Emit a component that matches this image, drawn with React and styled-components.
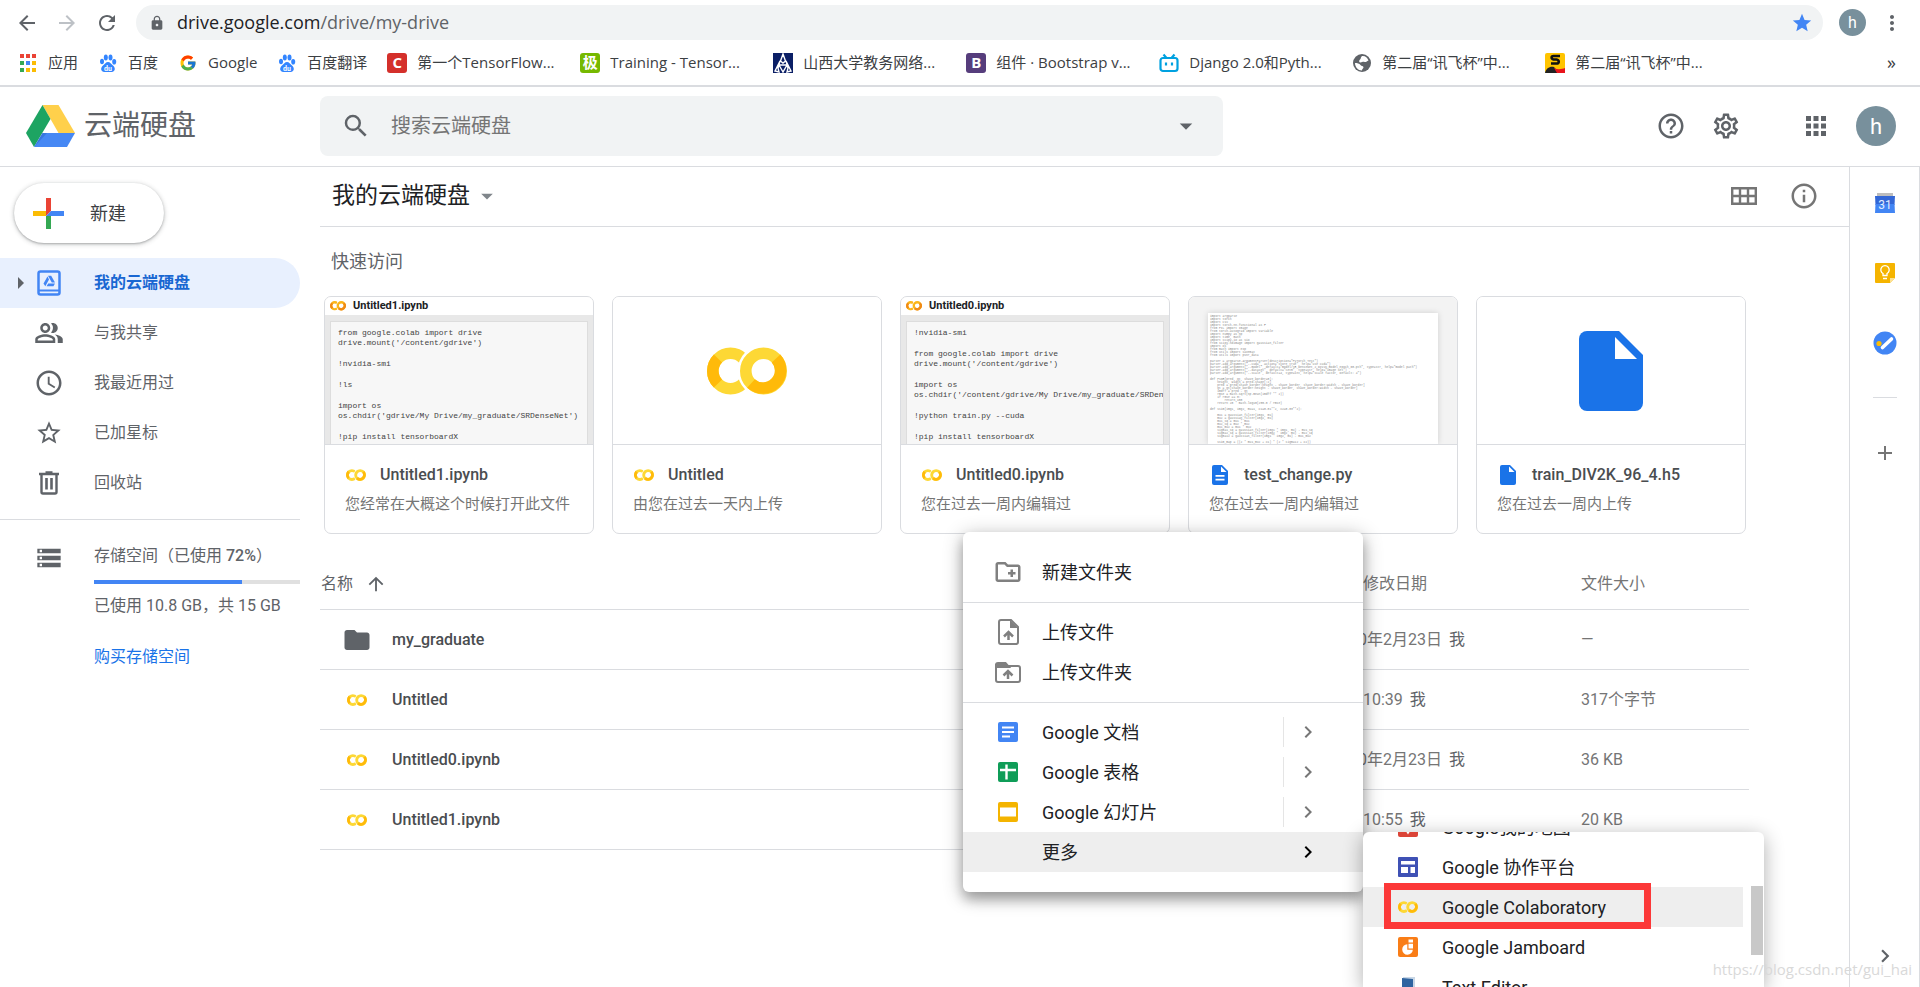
import React, { useId, useState } from "react";
import styled, { createGlobalStyle, css } from "styled-components";
import {
  MdAccessTime,
  MdApps,
  MdArrowBack,
  MdArrowDropDown,
  MdArrowForward,
  MdArrowUpward,
  MdAdd,
  MdChevronRight,
  MdFolder,
  MdHelpOutline,
  MdInfoOutline,
  MdLock,
  MdMoreVert,
  MdOutlineCreateNewFolder,
  MdOutlinePeopleAlt,
  MdOutlineSettings,
  MdRefresh,
  MdSearch,
  MdStar,
  MdStarBorder,
  MdStorage,
} from "react-icons/md";
import { FcGoogle } from "react-icons/fc";

const GlobalStyles = createGlobalStyle`
  :root {
    --color-grey-50: #f1f3f4;
    --color-grey-100: #eeeeee;
    --color-grey-200: #dadce0;
    --color-grey-500: #80868b;
    --color-grey-600: #5f6368;
    --color-grey-800: #3c4043;
    --color-grey-900: #202124;
    --color-blue: #4285f4;
    --color-blue-strong: #1a73e8;
    --font-app: Roboto, "Noto Sans CJK SC", sans-serif;
    --font-chrome: "Open Sans", "Noto Sans CJK SC", sans-serif;
  }

  *, *::before, *::after {
    box-sizing: border-box;
  }

  body {
    margin: 0;
    background: #fff;
    color: var(--color-grey-600);
    font-family: var(--font-app);
    font-size: 16px;
    line-height: 1.5;
  }

  button, input {
    font: inherit;
    color: inherit;
    border: none;
    background: none;
    padding: 0;
  }

  a {
    color: inherit;
    text-decoration: none;
  }

  svg {
    display: block;
    flex-shrink: 0;
  }
`;

const Page = styled.div`
  position: relative;
  display: flex;
  flex-direction: column;
  height: 100vh;
  overflow: hidden;
`;

/* ---------- browser bars ---------- */

const Toolbar = styled.div`
  display: flex;
  align-items: center;
  height: 40px;
  padding: 5px 16px 0 15px;
`;

const NavButtons = styled.div`
  display: flex;
  gap: 16px;
  width: 121px;
`;

const IconButton = styled.button`
  display: flex;
  align-items: center;
  justify-content: center;
  color: ${(props) => props.$color || "var(--color-grey-600)"};
`;

const Omnibox = styled.div`
  flex: 1;
  display: flex;
  align-items: center;
  height: 35px;
  padding: 0 10px 0 13px;
  border-radius: 18px;
  background: var(--color-grey-50);
`;

const Url = styled.span`
  flex: 1;
  margin-left: 12px;
  font-family: var(--font-chrome);
  font-size: 18px;
  color: var(--color-grey-600);
`;

const Host = styled.span`
  color: var(--color-grey-900);
`;

const Avatar = styled.button`
  display: flex;
  align-items: center;
  justify-content: center;
  width: ${(props) => props.$size}px;
  height: ${(props) => props.$size}px;
  border-radius: 50%;
  background: #78909c;
  color: #fff;
  font-size: ${(props) => (props.$size > 30 ? 22 : 16)}px;
`;

const ToolbarEnd = styled.div`
  display: flex;
  align-items: center;
  gap: 14px;
  margin-left: 16px;
`;

const BookmarksBar = styled.nav`
  display: flex;
  align-items: center;
  gap: 20px;
  height: 47px;
  padding: 0 24px 0 18px;
  border-bottom: 2px solid var(--color-grey-200);
  font-family: var(--font-chrome);
  font-size: 15px;
  color: var(--color-grey-800);
`;

const Bookmark = styled.a`
  display: flex;
  align-items: center;
  gap: 10px;
  white-space: nowrap;
  width: ${(props) => (props.$wide ? "173px" : "auto")};
`;

const More = styled.button`
  margin-left: auto;
  font-size: 18px;
`;

const Favicon = styled.span`
  display: flex;
  align-items: center;
  justify-content: center;
  width: 20px;
  height: 20px;
  border-radius: 3px;
  flex-shrink: 0;
  background: ${(props) => props.$bg || "none"};
  color: #fff;
  font-weight: 700;
`;

/* ---------- drive header ---------- */

const Header = styled.header`
  display: flex;
  align-items: center;
  height: 80px;
  padding: 0 24px 1px 0;
  border-bottom: 1px solid var(--color-grey-200);
`;

const Brand = styled.a`
  display: flex;
  align-items: center;
  gap: 9px;
  width: 320px;
  flex-shrink: 0;
  padding-left: 26px;
  font-size: 28px;
`;

const SearchBox = styled.form`
  flex: 1;
  max-width: 903px;
  display: flex;
  align-items: center;
  height: 60px;
  padding: 0 22px 0 21px;
  border-radius: 8px;
  background: var(--color-grey-50);
`;

const SearchInput = styled.input`
  flex: 1;
  margin-left: 20px;
  font-size: 20px;
  outline: none;

  &::placeholder {
    color: #757575;
    opacity: 1;
  }
`;

const HeaderActions = styled.div`
  display: flex;
  align-items: center;
  gap: 25px;
  margin-left: auto;
`;

const AppsActions = styled.div`
  display: flex;
  align-items: center;
  gap: 25px;
  margin-left: 35px;
`;

/* ---------- layout ---------- */

const Body = styled.div`
  flex: 1;
  display: flex;
  border-right: 1px solid var(--color-grey-200);
`;

const Sidebar = styled.aside`
  width: 300px;
  margin-right: 20px;
  flex-shrink: 0;
  padding-top: 16px;
`;

const NewButton = styled.button`
  display: flex;
  align-items: center;
  gap: 26px;
  width: 150px;
  height: 60px;
  margin-left: 14px;
  padding-left: 19px;
  border-radius: 30px;
  font-size: 18px;
  color: var(--color-grey-800);
  box-shadow: 0 1px 2px rgba(60, 64, 67, 0.3), 0 1px 4px 1px rgba(60, 64, 67, 0.2);
`;

const NavList = styled.nav`
  padding: 15px 0 11px;
  border-bottom: 1px solid var(--color-grey-200);
`;

const NavItem = styled.a`
  display: grid;
  grid-template-columns: 36px 58px 1fr;
  align-items: center;
  height: 50px;
  border-radius: 0 25px 25px 0;

  ${(props) =>
    props.$active &&
    css`
      background: #e8f0fe;
      color: #1967d2;
      font-weight: 700;
    `}
`;

const NavIcon = styled.span`
  display: flex;
  justify-content: center;
  width: 26px;
  color: ${(props) => (props.$active ? "var(--color-blue)" : "var(--color-grey-600)")};
`;

const Expander = styled.span`
  justify-self: end;
  margin-right: 12px;
  border: 6px solid transparent;
  border-left-color: var(--color-grey-600);
  border-right: none;
`;

const Storage = styled.section`
  display: grid;
  grid-template-columns: 36px 58px 1fr;
  align-items: start;
  padding-top: 24px;
`;

const StorageInfo = styled.div`
  display: flex;
  flex-direction: column;
  line-height: 24px;
`;

const Percent = styled.span`
  font-weight: 500;
`;

const Meter = styled.div`
  height: 4px;
  margin: 12px 0 10px;
  background: #e0e0e0;
`;

const MeterFill = styled.div`
  height: 4px;
  background: var(--color-blue);
`;

const BuyLink = styled.a`
  margin-top: 27px;
  color: var(--color-blue-strong);
`;

const Main = styled.main`
  flex: 1;
  min-width: 0;
`;

const MainHeader = styled.div`
  display: flex;
  align-items: center;
  height: 60px;
  padding: 0 30px 1px 12px;
  border-bottom: 1px solid var(--color-grey-200);
`;

const Title = styled.button`
  display: flex;
  align-items: center;
  gap: 3px;
  margin-right: auto;
  font-size: 23px;
  color: var(--color-grey-900);
`;

const ViewActions = styled.div`
  display: flex;
  align-items: center;
  gap: 32px;
`;

const Content = styled.div`
  padding-right: 100px;
`;

const SectionTitle = styled.h2`
  margin: 0;
  padding: 23px 11px 22px;
  font-size: 18px;
  font-weight: 400;
  line-height: 24px;
`;

/* ---------- quick access cards ---------- */

const Cards = styled.div`
  display: grid;
  grid-template-columns: repeat(5, 1fr);
  gap: 18px;
  padding: 0 3px 0 4px;
`;

const Card = styled.article`
  height: 238px;
  min-width: 0;
  border: 1px solid var(--color-grey-200);
  border-radius: 7px;
  overflow: hidden;
`;

const Preview = styled.div`
  display: flex;
  flex-direction: column;
  align-items: ${(props) => (props.$center ? "center" : "stretch")};
  justify-content: ${(props) => (props.$center ? "center" : "flex-start")};
  height: 148px;
  overflow: hidden;
  border-bottom: 1px solid var(--color-grey-200);
  background: ${(props) => props.$bg || "#fff"};
`;

const NotebookTitle = styled.div`
  display: flex;
  align-items: center;
  gap: 7px;
  height: 18px;
  flex-shrink: 0;
  padding-left: 5px;
  font-size: 11px;
  font-weight: 700;
  color: var(--color-grey-900);
  background: #fff;
`;

const Notebook = styled.div`
  display: flex;
  flex-direction: column;
  gap: 11px;
  flex: 1;
  margin: 6px 5px 0;
  padding: 6px 0 0 7px;
  border: 1px solid #dddddd;
  border-bottom: none;
  overflow: hidden;
  background: #f7f7f7;
`;

const Cell = styled.pre`
  margin: 0;
  font-family: "Liberation Mono", monospace;
  font-size: 8px;
  line-height: 10px;
  color: #444;
`;

const Sheet = styled.pre`
  flex: 1;
  margin: 16px 19px 0;
  padding: 2px;
  overflow: hidden;
  background: #fff;
  box-shadow: 0 0 6px rgba(0, 0, 0, 0.15);
  font-family: "Liberation Mono", monospace;
  font-size: 3px;
  line-height: 3px;
  color: #888;
`;

const CardBody = styled.div`
  padding: 18px 10px 0 20px;
  line-height: 24px;
`;

const CardName = styled.div`
  display: grid;
  grid-template-columns: 22px 1fr;
  gap: 13px;
  align-items: center;
  justify-items: center;
  margin-bottom: 5px;
  color: #4a4d50;
  font-weight: 500;

  span {
    justify-self: start;
  }
`;

const CardNote = styled.div`
  font-size: 15px;
  color: #757575;
  white-space: nowrap;
`;

/* ---------- file table ---------- */

const Table = styled.table`
  width: 100%;
  margin-top: 25px;
  border-collapse: collapse;
  table-layout: fixed;
  text-align: left;
  color: #757575;

  th {
    height: 50px;
    padding: 1px 0 0 1px;
    font-weight: 400;
    border-bottom: 1px solid var(--color-grey-200);
  }

  td {
    height: 60px;
    padding: 1px 0 0 1px;
    border-bottom: 1px solid var(--color-grey-200);
  }
`;

const Col = styled.col`
  width: ${(props) => props.$width};
`;

const SortButton = styled.button`
  display: flex;
  align-items: center;
  gap: 12px;
  color: var(--color-grey-600);
`;

const FileName = styled.div`
  display: grid;
  grid-template-columns: 30px 1fr;
  gap: 20px;
  align-items: center;
  justify-items: center;
  padding-left: 21px;
  color: #4a4d50;
  font-weight: 500;

  span {
    justify-self: start;
  }
`;

const Owner = styled.span`
  margin-left: 7px;
  color: var(--color-grey-600);
`;

/* ---------- side panel ---------- */

const SidePanel = styled.aside`
  display: flex;
  flex-direction: column;
  align-items: center;
  width: 70px;
  padding: 24px 2px 18px 2px;
  border-left: 1px solid var(--color-grey-200);
`;

const PanelApps = styled.div`
  display: flex;
  flex-direction: column;
  gap: 46px;
  padding-bottom: 42px;
  border-bottom: 1px solid var(--color-grey-200);
`;

const PanelAdd = styled(IconButton)`
  margin: 43px 0 auto;
`;

/* ---------- menus ---------- */

const Menu = styled.div`
  position: absolute;
  left: 963px;
  top: 532px;
  z-index: 2;
  width: 400px;
  padding: 20px 0;
  border-radius: 6px;
  background: #fff;
  box-shadow: 0 4px 20px rgba(0, 0, 0, 0.3), 0 8px 12px rgba(0, 0, 0, 0.22);
`;

const MenuItem = styled.button`
  display: grid;
  grid-template-columns: ${(props) => props.$iconWidth || "48px"} 1fr auto;
  align-items: center;
  width: ${(props) => props.$width || "100%"};
  height: 40px;
  padding: 0 43px 0 31px;
  font-size: 18px;
  text-align: left;
  color: var(--color-grey-900);
  background: ${(props) => (props.$active ? "var(--color-grey-100)" : "none")};
`;

const MenuIcon = styled.span`
  display: flex;
  justify-content: center;
  width: 28px;
  color: #808080;
`;

const MenuArrow = styled.span`
  display: flex;
  align-items: center;
  height: 30px;
  padding-left: 12px;
  border-left: 1px solid ${(props) => (props.$divided ? "#e5e5e5" : "transparent")};
  color: ${(props) => (props.$divided ? "#777" : "#000")};
`;

const MenuDivider = styled.hr`
  margin: 10px 0 9px;
  border: none;
  border-top: 1px solid var(--color-grey-200);
`;

const Submenu = styled.div`
  position: absolute;
  left: 1363px;
  top: 832px;
  bottom: 0;
  z-index: 3;
  width: 401px;
  overflow: hidden;
  border-radius: 6px 6px 0 0;
  background: #fff;
  box-shadow: 0 4px 20px rgba(0, 0, 0, 0.32);
`;

// the list is scrolled down, so its first entry is cut by the top edge
const SubmenuList = styled.div`
  margin-top: -25px;
`;

const ScrollThumb = styled.div`
  position: absolute;
  right: 1px;
  top: 54px;
  width: 12px;
  height: 69px;
  background: #c8c8c8;
`;

const Marker = styled.div`
  position: absolute;
  left: 21px;
  top: 51px;
  width: 267px;
  height: 46px;
  border: 7px solid #fc3838;
`;

const Watermark = styled.div`
  position: absolute;
  right: 8px;
  bottom: 6px;
  z-index: 4;
  font-family: var(--font-chrome);
  font-size: 15px;
  line-height: 24px;
  color: #d9d9d9;
`;

/* ---------- icons ---------- */

function ColabIcon({ width = 20, warm }) {
  const id = useId();
  const light = warm ? "#fbb519" : "#fdd835";
  const dark = warm ? "#f08a15" : "#ffba0a";
  return (
    <svg width={width} height={width * 0.6} viewBox="0 0 80 48">
      <mask id={id} maskUnits="userSpaceOnUse" x="0" y="0" width="80" height="48">
        <rect width="80" height="48" fill="#fff" />
        <circle cx="56.5" cy="24" r="26" fill="#000" />
        <path d="M38 0h42v48H38z" fill="#000" />
      </mask>
      <g fill="none" strokeWidth="11.6">
        <g mask={`url(#${id})`}>
          <circle cx="23.5" cy="24" r="17.7" stroke={light} />
          <path d="M11 11.500a17.700 17.700 0 0 0 0 25" stroke={dark} />
        </g>
        <circle cx="56.5" cy="24" r="17.7" stroke={light} />
        <path d="M69 11.500a17.700 17.700 0 0 1-25 25" stroke={dark} />
      </g>
    </svg>
  );
}

const DocFileIcon = ({ width = 17, lines }) => (
  <svg width={width} height={width * 1.25} viewBox="0 0 64 80">
    <path d="M8 0h32l24 24v48a8 8 0 0 1-8 8H8a8 8 0 0 1-8-8V8a8 8 0 0 1 8-8z" fill="#1a73e8" />
    <path d="M36 6v22h22z" fill="#fff" />
    {lines && <path d="M14 43h36M14 58h36" stroke="#fff" strokeWidth="7" />}
  </svg>
);

const DriveLogo = () => (
  <svg width="49" height="42" viewBox="0 0 49 42">
    <path d="M16.500 0h16L49 28H32.500z" fill="#ffd04b" />
    <path d="M16.500 0l8 14L8 42 0 28z" fill="#1da462" />
    <path d="M16.500 28H49l-8 14H8z" fill="#4688f4" />
    <path d="M16.500 28l-8.500 14 13-14z" fill="#2a66c9" opacity=".5" />
  </svg>
);

const PlusIcon = () => (
  <svg width="31" height="31" viewBox="0 0 31 31">
    <path d="M13 0h5v13l-5 5z" fill="#ea4335" />
    <path d="M0 13h13v5H0z" fill="#fbbc04" />
    <path d="M13 18h5v13h-5z" fill="#34a853" />
    <path d="M18 13h13v5H13z" fill="#4285f4" />
  </svg>
);

const MyDriveIcon = () => (
  <svg width="24" height="26" viewBox="0 0 24 26" fill="none" stroke="currentColor">
    <rect x="1.500" y="1.500" width="21" height="23" rx="2" strokeWidth="2.500" />
    <path d="M2 20.500h20" strokeWidth="2" />
    <path d="M10.500 6.500L6.500 13.500 8.300 16.300 12 9.500z" fill="currentColor" stroke="none" />
    <path d="M11 5.800h3.200L18 12.500h-3.200z" fill="currentColor" stroke="none" />
    <path d="M11.200 13.500H18l-1.600 2.800H9.600z" fill="currentColor" stroke="none" />
  </svg>
);

const TrashIcon = () => (
  <svg width="20" height="24" viewBox="0 0 20 24" fill="none" stroke="currentColor">
    <path d="M0 3h20M6.500 1.500h7" strokeWidth="2.400" />
    <path d="M2.500 4v17a1.500 1.500 0 0 0 1.500 1.500h12a1.500 1.500 0 0 0 1.500-1.500V4" strokeWidth="2.400" />
    <path d="M7.500 7v11.500M12.500 7v11.500" strokeWidth="2.600" />
  </svg>
);

const GridIcon = () => (
  <svg width="26" height="18" viewBox="0 0 26 18" fill="none" stroke="#757575" strokeWidth="2.400">
    <path d="M1.200 1.200h23.600v15.600H1.200zM1 9h24M9 1v16M17 1v16" />
  </svg>
);

const UploadFileIcon = () => (
  <svg width="21" height="26" viewBox="0 0 21 26" fill="none" stroke="currentColor" strokeWidth="2">
    <path d="M13 1H3a2 2 0 0 0-2 2v20a2 2 0 0 0 2 2h15a2 2 0 0 0 2-2V8z" />
    <path d="M12 1l8 8h-8z" fill="currentColor" stroke="none" />
    <path d="M10.500 21v-7M6 17.500l4.500-4.500 4.500 4.500" strokeWidth="2.500" />
  </svg>
);

const UploadFolderIcon = () => (
  <svg width="26" height="21" viewBox="0 0 26 21" fill="none" stroke="currentColor" strokeWidth="2">
    <path d="M1 3v15a2 2 0 0 0 2 2h20a2 2 0 0 0 2-2V6a2 2 0 0 0-2-2H13z" />
    <path d="M1 5V3a2 2 0 0 1 2-2h7.500L14 5z" fill="currentColor" />
    <path d="M13 17v-7M8.500 13.500L13 9l4.500 4.500" strokeWidth="2.500" />
  </svg>
);

const DocsIcon = () => (
  <svg width="20" height="20" viewBox="0 0 20 20">
    <rect width="20" height="20" rx="2" fill="#4285f4" />
    <path d="M4 5.500h12M4 10h12M4 14.500h8" stroke="#fff" strokeWidth="2" />
  </svg>
);

const SheetsIcon = () => (
  <svg width="20" height="20" viewBox="0 0 20 20">
    <rect width="20" height="20" rx="2" fill="#0f9d58" />
    <path d="M2 8h16M8.500 2.500v15" stroke="#fff" strokeWidth="2.400" />
  </svg>
);

const SlidesIcon = () => (
  <svg width="20" height="20" viewBox="0 0 20 20">
    <rect width="20" height="20" rx="2" fill="#f4b400" />
    <rect x="2" y="5.500" width="16" height="9" fill="#fff" />
  </svg>
);

const MyMapsIcon = () => (
  <svg width="20" height="20" viewBox="0 0 20 20">
    <rect width="20" height="20" rx="2" fill="#db4437" />
    <path d="M10 3a4.500 4.500 0 0 0-4.500 4.500C5.500 11 10 17.500 10 17.500s4.500-6.500 4.500-10A4.500 4.500 0 0 0 10 3z" fill="#fff" />
  </svg>
);

const SitesIcon = () => (
  <svg width="20" height="20" viewBox="0 0 20 20">
    <rect width="20" height="20" rx="1" fill="#3f51b5" />
    <path d="M3 4h14v3.500H3zM3 10h7v6H3zM12.500 10H17v6h-4.500z" fill="#fff" />
  </svg>
);

const JamboardIcon = () => (
  <svg width="20" height="20" viewBox="0 0 20 20">
    <rect width="20" height="20" rx="2" fill="#f97d17" />
    <path d="M9.300 7.200v5.500h5.500a5.300 5.300 0 1 1-5.500-5.500z" fill="#fff" />
    <path d="M10.500 2.500H15v3h-4.500zM10.500 6.700H15v4.800h-4.500z" fill="#fff" />
  </svg>
);

const TextEditorIcon = () => (
  <svg width="20" height="20" viewBox="0 0 20 20">
    <path d="M5 0h12v20H5z" fill="#c9d7e6" />
    <path d="M4 1l11 1v18H4z" fill="#2f64a0" />
  </svg>
);

const CalendarIcon = () => (
  <svg width="24" height="24" viewBox="0 0 24 24">
    <path d="M4 2h16v3H4z" fill="#bdbdbd" />
    <path d="M2 5h20l-.500 9h-19z" fill="#3367d6" />
    <path d="M2.500 13h19l.500 9H2z" fill="#4285f4" />
    <text x="12" y="17.500" textAnchor="middle" fontSize="12" fontFamily="Roboto, sans-serif" fill="#e3edff">
      31
    </text>
  </svg>
);

const KeepIcon = () => (
  <svg width="24" height="24" viewBox="0 0 24 24">
    <path d="M3 2h18a1 1 0 0 1 1 1v14l-5 5H3a1 1 0 0 1-1-1V3a1 1 0 0 1 1-1z" fill="#f5b400" />
    <path d="M22 17h-5v5z" fill="#fde293" />
    <path d="M10 14.500v-2a4.200 4.200 0 1 1 4 0v2zM10 17.500h4" fill="none" stroke="#fff" strokeWidth="1.300" />
  </svg>
);

const TasksIcon = () => (
  <svg width="24" height="24" viewBox="0 0 24 24">
    <circle cx="12" cy="12" r="11.500" fill="#4285f4" />
    <path d="M9.500 16.500L18.500 8" stroke="#fff" strokeWidth="3.600" strokeLinecap="round" />
    <circle cx="6" cy="12.500" r="2.600" fill="#fbbc04" />
  </svg>
);

const AppsGridIcon = () => (
  <svg width="20" height="20" viewBox="0 0 20 20">
    {["#ea4335", "#ea4335", "#ea4335", "#34a853", "#4285f4", "#fbbc04", "#34a853", "#fbbc04", "#fbbc04"].map(
      (fill, i) => (
        <rect key={i} x={2 + (i % 3) * 6} y={1 + Math.floor(i / 3) * 7} width="4" height="4" fill={fill} />
      )
    )}
  </svg>
);

const BaiduIcon = () => (
  <svg width="20" height="20" viewBox="0 0 20 20">
    <g fill="#3385ff">
      <ellipse cx="4" cy="8.500" rx="2" ry="2.800" />
      <ellipse cx="7.800" cy="4.500" rx="2" ry="3" />
      <ellipse cx="12.500" cy="4.500" rx="2" ry="3" />
      <ellipse cx="16.200" cy="8.800" rx="2" ry="2.800" />
      <path d="M10 9c2.200 0 3 2 5 3.600 3.200 2.800 1.800 6.400-1.200 6.400H6.200C3.200 19 1.800 15.400 5 12.600 7 11 7.800 9 10 9z" />
    </g>
    <text x="10" y="17.500" textAnchor="middle" fontSize="7" fontWeight="700" fontFamily="Roboto, sans-serif" fill="#fff">
      du
    </text>
  </svg>
);

const GlobeIcon = () => (
  <svg width="20" height="20" viewBox="0 0 20 20">
    <circle cx="10" cy="10" r="9" fill="#5f6368" />
    <path d="M10 3c3-.500 5.500 1.500 6.500 4.500-2 .500-2 2-4 1.500-1.500-.500-2.500.500-4 .500C7 9.500 6.500 7.500 8 6.500 9 6 8.500 4 10 3z" fill="#fff" />
    <path d="M3 10c2 0 4.500.500 5.500 2 .800 1.200 3 .800 3 2.500 0 1-1.500 1-1.500 3-4 0-7-3.500-7-7.500z" fill="#fff" />
  </svg>
);

const UniversityIcon = () => (
  <svg width="20" height="20" viewBox="0 0 20 20">
    <rect width="20" height="20" fill="#0b1f66" />
    <path d="M10 1l2.500 7-2.500 2-2.500-2zM7 8l-5 10 4 1-1-4zM13 8l5 10-4 1 1-4zM6 12h8l-4 7z" fill="none" stroke="#fff" strokeWidth="1.400" />
  </svg>
);

const BiliIcon = () => (
  <svg width="20" height="20" viewBox="0 0 20 20" fill="none" stroke="#00a1e0" strokeWidth="2.200">
    <rect x="1.500" y="5" width="17" height="13" rx="2.500" />
    <path d="M4.500 1.500L7.500 5M15.500 1.500l-3 3.500M7 9.500v3M13 9.500v3" />
  </svg>
);

const SIcon = () => (
  <svg width="20" height="20" viewBox="0 0 20 20">
    <rect width="20" height="20" rx="2" fill="#ffc400" />
    <path d="M15 3H8.500c-2.500 0-2.500 3 0 3.500h3c3 .500 3 4 0 4H6" fill="none" stroke="#111" strokeWidth="2.600" />
    <path d="M0 20c1-5 5-7 9-6l5 6z" fill="#222" />
    <path d="M9 15c4 2 8 1 11 0v5h-8z" fill="#e8141c" />
  </svg>
);

/* ---------- data ---------- */

const bookmarks = [
  { label: "应用", icon: <AppsGridIcon /> },
  { label: "百度", icon: <BaiduIcon /> },
  { label: "Google", icon: <FcGoogle size={18} /> },
  { label: "百度翻译", icon: <BaiduIcon /> },
  { label: "第一个TensorFlow...", icon: "C", bg: "#d4302b", wide: true },
  { label: "Training - Tensor...", icon: "极", bg: "#76b900", wide: true },
  { label: "山西大学教务网络...", icon: <UniversityIcon />, wide: true },
  { label: "组件 · Bootstrap v...", icon: "B", bg: "#563d7c", wide: true },
  { label: "Django 2.0和Pyth...", icon: <BiliIcon />, wide: true },
  { label: "第二届“讯飞杯”中...", icon: <GlobeIcon />, wide: true },
  { label: "第二届“讯飞杯”中...", icon: <SIcon />, wide: true },
];

const navItems = [
  { label: "我的云端硬盘", icon: <MyDriveIcon />, active: true },
  { label: "与我共享", icon: <MdOutlinePeopleAlt size={30} /> },
  { label: "我最近用过", icon: <MdAccessTime size={30} /> },
  { label: "已加星标", icon: <MdStarBorder size={28} /> },
  { label: "回收站", icon: <TrashIcon /> },
];

const notebook1 = [
  "from google.colab import drive\ndrive.mount('/content/gdrive')",
  "!nvidia-smi",
  "!ls",
  "import os\nos.chdir('gdrive/My Drive/my_graduate/SRDenseNet')",
  "!pip install tensorboardX",
];

const notebook0 = [
  "!nvidia-smi",
  "from google.colab import drive\ndrive.mount('/content/gdrive')",
  "import os\nos.chdir('/content/gdrive/My Drive/my_graduate/SRDenseNet')",
  "!python train.py --cuda",
  "!pip install tensorboardX",
];

const pythonSource = `import argparse
import torch
import cv2
import torch.nn.functional as F
from PIL import Image
from torch.autograd import Variable
import numpy as np
import time, math
import scipy.io as sio
from scipy.ndimage import gaussian_filter
import os
from math import exp
from utils import savemat
from utils import psnr_data

parser = argparse.ArgumentParser(description="PyTorch Test")
parser.add_argument("--cuda", action="store_true", help="use cuda")
parser.add_argument("--model", default="model/SR_DenseNet_2_DIV2K_model_epoch_60.pth", type=str, help="model path")
parser.add_argument("--dataset", default="Set5", type=str, help="image set")
parser.add_argument("--scale", default=4, type=int, help="scale factor, Default: 4")

def PSNR(pred, gt, shave_border=0):
    height, width = pred.shape[:2]
    pred = pred[shave_border:height - shave_border, shave_border:width - shave_border]
    gt = gt[shave_border:height - shave_border, shave_border:width - shave_border]
    imdff = pred - gt
    rmse = math.sqrt(np.mean(imdff ** 2))
    if rmse == 0:
        return 100
    return 20 * math.log10(255.0 / rmse)

def ssim(img1, img2, mu=1, C1=0.01**2, C2=0.03**2):

    mu1 = gaussian_filter(img1, mu)
    mu2 = gaussian_filter(img2, mu)
    mu1_sq = mu1 * mu1
    mu2_sq = mu2 * mu2
    mu1_mu2 = mu1 * mu2
    sigma1_sq = gaussian_filter(img1 * img1, mu) - mu1_sq
    sigma2_sq = gaussian_filter(img2 * img2, mu) - mu2_sq
    sigma12 = gaussian_filter(img1 * img2, mu) - mu1_mu2

    ssim_map = ((2 * mu1_mu2 + C1) * (2 * sigma12 + C2))`;

const cards = [
  { name: "Untitled1.ipynb", note: "您经常在大概这个时候打开此文件", type: "notebook", cells: notebook1 },
  { name: "Untitled", note: "由您在过去一天内上传", type: "colab" },
  { name: "Untitled0.ipynb", note: "您在过去一周内编辑过", type: "notebook", cells: notebook0 },
  { name: "test_change.py", note: "您在过去一周内编辑过", type: "source" },
  { name: "train_DIV2K_96_4.h5", note: "您在过去一周内上传", type: "file" },
];

const files = [
  { name: "my_graduate", folder: true, date: "2020年2月23日", size: "—" },
  { name: "Untitled", date: "上午10:39", size: "317个字节" },
  { name: "Untitled0.ipynb", date: "2020年2月23日", size: "36 KB" },
  { name: "Untitled1.ipynb", date: "上午10:55", size: "20 KB" },
];

const googleApps = [
  { label: "Google 文档", icon: <DocsIcon /> },
  { label: "Google 表格", icon: <SheetsIcon /> },
  { label: "Google 幻灯片", icon: <SlidesIcon /> },
];

const moreApps = [
  { label: "Google我的地图", icon: <MyMapsIcon /> },
  { label: "Google 协作平台", icon: <SitesIcon /> },
  { label: "Google Colaboratory", icon: <ColabIcon />, active: true },
  { label: "Google Jamboard", icon: <JamboardIcon /> },
  { label: "Text Editor", icon: <TextEditorIcon /> },
];

/* ---------- components ---------- */

const CardPreview = ({ card }) => {
  if (card.type === "notebook")
    return (
      <Preview $bg="#e8e8e8">
        <NotebookTitle>
          <ColabIcon width={16} warm />
          {card.name}
        </NotebookTitle>
        <Notebook>
          {card.cells.map((cell) => (
            <Cell key={cell}>{cell}</Cell>
          ))}
        </Notebook>
      </Preview>
    );
  if (card.type === "source")
    return (
      <Preview $bg="#f3f3f3">
        <Sheet>{pythonSource}</Sheet>
      </Preview>
    );
  return <Preview $center>{card.type === "colab" ? <ColabIcon width={80} /> : <DocFileIcon width={64} />}</Preview>;
};

const QuickCard = ({ card }) => {
  const isFile = card.type === "source" || card.type === "file";
  return (
    <Card>
      <CardPreview card={card} />
      <CardBody>
        <CardName>
          {isFile ? <DocFileIcon width={16} lines={card.type === "source"} /> : <ColabIcon />}
          <span>{card.name}</span>
        </CardName>
        <CardNote>{card.note}</CardNote>
      </CardBody>
    </Card>
  );
};

const FileRow = ({ file }) => (
  <tr>
    <td>
      <FileName>
        {file.folder ? <MdFolder size={30} color="#5f6368" /> : <ColabIcon />}
        <span>{file.name}</span>
      </FileName>
    </td>
    <td>
      {file.date}
      <Owner>我</Owner>
    </td>
    <td>{file.size}</td>
  </tr>
);

const ContextMenu = () => (
  <Menu role="menu">
    <MenuItem>
      <MenuIcon>
        <MdOutlineCreateNewFolder size={30} />
      </MenuIcon>
      新建文件夹
    </MenuItem>
    <MenuDivider />
    <MenuItem>
      <MenuIcon>
        <UploadFileIcon />
      </MenuIcon>
      上传文件
    </MenuItem>
    <MenuItem>
      <MenuIcon>
        <UploadFolderIcon />
      </MenuIcon>
      上传文件夹
    </MenuItem>
    <MenuDivider />
    {googleApps.map((app) => (
      <MenuItem key={app.label}>
        <MenuIcon>{app.icon}</MenuIcon>
        {app.label}
        <MenuArrow $divided>
          <MdChevronRight size={24} />
        </MenuArrow>
      </MenuItem>
    ))}
    <MenuItem $active>
      <MenuIcon />
      更多
      <MenuArrow>
        <MdChevronRight size={24} />
      </MenuArrow>
    </MenuItem>
  </Menu>
);

const MoreMenu = () => (
  <Submenu role="menu">
    <SubmenuList>
      {moreApps.map((app) => (
        <MenuItem key={app.label} $width="380px" $iconWidth="48px" $active={app.active}>
          <MenuIcon>{app.icon}</MenuIcon>
          {app.label}
        </MenuItem>
      ))}
    </SubmenuList>
    <ScrollThumb />
    <Marker />
  </Submenu>
);

const App = () => {
  const [query, setQuery] = useState("");
  const used = 72;

  return (
    <>
      <GlobalStyles />
      <Page>
        <Toolbar>
          <NavButtons>
            <IconButton aria-label="后退">
              <MdArrowBack size={24} />
            </IconButton>
            <IconButton aria-label="前进" $color="#bdc1c6">
              <MdArrowForward size={24} />
            </IconButton>
            <IconButton aria-label="重新加载">
              <MdRefresh size={24} />
            </IconButton>
          </NavButtons>
          <Omnibox>
            <MdLock size={16} />
            <Url>
              <Host>drive.google.com</Host>/drive/my-drive
            </Url>
            <MdStar size={22} color="#4285f4" />
          </Omnibox>
          <ToolbarEnd>
            <Avatar $size={27}>h</Avatar>
            <IconButton aria-label="菜单">
              <MdMoreVert size={24} />
            </IconButton>
          </ToolbarEnd>
        </Toolbar>
        <BookmarksBar>
          {bookmarks.map((item, i) => (
            <Bookmark href="#" key={i} $wide={item.wide}>
              <Favicon $bg={item.bg}>{item.icon}</Favicon>
              {item.label}
            </Bookmark>
          ))}
          <More>»</More>
        </BookmarksBar>

        <Header>
          <Brand href="#">
            <DriveLogo />
            云端硬盘
          </Brand>
          <SearchBox onSubmit={(e) => e.preventDefault()}>
            <IconButton aria-label="搜索">
              <MdSearch size={30} />
            </IconButton>
            <SearchInput
              aria-label="搜索云端硬盘"
              placeholder="搜索云端硬盘"
              value={query}
              onChange={(e) => setQuery(e.target.value)}
            />
            <IconButton type="button" aria-label="搜索选项">
              <MdArrowDropDown size={30} />
            </IconButton>
          </SearchBox>
          <HeaderActions>
            <IconButton aria-label="帮助">
              <MdHelpOutline size={30} />
            </IconButton>
            <IconButton aria-label="设置">
              <MdOutlineSettings size={30} />
            </IconButton>
            <AppsActions>
              <IconButton aria-label="Google 应用">
                <MdApps size={30} />
              </IconButton>
              <Avatar $size={40}>h</Avatar>
            </AppsActions>
          </HeaderActions>
        </Header>

        <Body>
          <Sidebar>
            <NewButton>
              <PlusIcon />
              新建
            </NewButton>
            <NavList>
              {navItems.map((item) => (
                <NavItem href="#" key={item.label} $active={item.active}>
                  {item.active ? <Expander /> : <span />}
                  <NavIcon $active={item.active}>{item.icon}</NavIcon>
                  {item.label}
                </NavItem>
              ))}
            </NavList>
            <Storage>
              <span />
              <NavIcon>
                <MdStorage size={28} />
              </NavIcon>
              <StorageInfo>
                <span>
                  存储空间（已使用 <Percent>{used}%</Percent>）
                </span>
                <Meter>
                  <MeterFill style={{ width: `${used}%` }} />
                </Meter>
                <span>已使用 10.8 GB，共 15 GB</span>
                <BuyLink href="#">购买存储空间</BuyLink>
              </StorageInfo>
            </Storage>
          </Sidebar>

          <Main>
            <MainHeader>
              <Title>
                我的云端硬盘
                <MdArrowDropDown size={28} color="#80868b" />
              </Title>
              <ViewActions>
                <IconButton aria-label="网格视图">
                  <GridIcon />
                </IconButton>
                <IconButton aria-label="查看详细信息" $color="#757575">
                  <MdInfoOutline size={30} />
                </IconButton>
              </ViewActions>
            </MainHeader>
            <Content>
              <SectionTitle>快速访问</SectionTitle>
              <Cards>
                {cards.map((card) => (
                  <QuickCard key={card.name} card={card} />
                ))}
              </Cards>
              <Table>
                <colgroup>
                  <Col />
                  <Col $width="250px" />
                  <Col $width="169px" />
                </colgroup>
                <thead>
                  <tr>
                    <th>
                      <SortButton>
                        名称
                        <MdArrowUpward size={22} />
                      </SortButton>
                    </th>
                    <th>上次修改日期</th>
                    <th>文件大小</th>
                  </tr>
                </thead>
                <tbody>
                  {files.map((file) => (
                    <FileRow key={file.name} file={file} />
                  ))}
                </tbody>
              </Table>
            </Content>
          </Main>

          <SidePanel>
            <PanelApps>
              <CalendarIcon />
              <KeepIcon />
              <TasksIcon />
            </PanelApps>
            <PanelAdd aria-label="获取插件" $color="#757575">
              <MdAdd size={24} />
            </PanelAdd>
            <IconButton aria-label="隐藏侧边栏">
              <MdChevronRight size={26} />
            </IconButton>
          </SidePanel>
        </Body>

        <ContextMenu />
        <MoreMenu />
        <Watermark>https://blog.csdn.net/gui_hai</Watermark>
      </Page>
    </>
  );
};

export default App;
